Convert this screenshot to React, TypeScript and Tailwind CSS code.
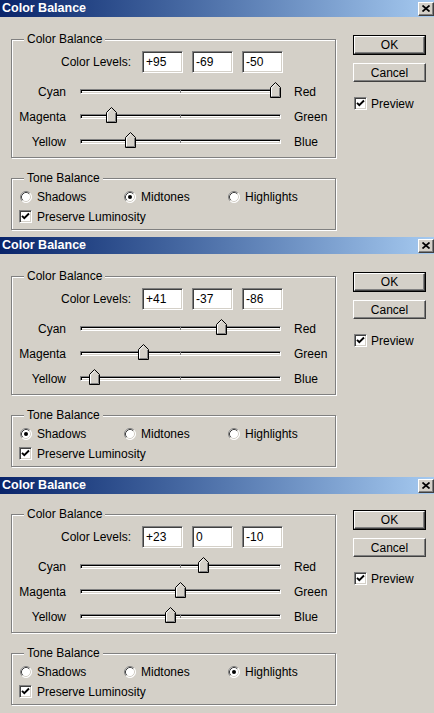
import React from "react";

type Tone = "shadows" | "midtones" | "highlights";

type DialogProps = {
  levels: [number, number, number];
  tone: Tone;
  className: string;
  shift?: boolean;
};

const sliders = [
  { left: "Cyan", right: "Red" },
  { left: "Magenta", right: "Green" },
  { left: "Yellow", right: "Blue" },
];

const tones: { id: Tone; label: string }[] = [
  { id: "shadows", label: "Shadows" },
  { id: "midtones", label: "Midtones" },
  { id: "highlights", label: "Highlights" },
];

const sunken =
  "border border-t-[#808080] border-l-[#808080] border-r-white border-b-white shadow-[inset_1px_1px_0_#404040,inset_-1px_-1px_0_#d4d0c8]";
const raised =
  "border border-t-white border-l-white border-r-[#404040] border-b-[#404040] shadow-[inset_-1px_-1px_0_#808080,inset_1px_1px_0_#d4d0c8]";

function fmt(v: number) {
  return v > 0 ? `+${v}` : `${v}`;
}

function Thumb() {
  return (
    <svg width="11" height="16" viewBox="0 0 11 16">
      <polygon points="0.5,5.5 5.5,0.5 10.5,5.5 10.5,15.5 0.5,15.5" fill="#d4d0c8" />
      <path d="M1.5 14.5 V5.9 L5.5 1.9" stroke="#fff" fill="none" />
      <path d="M9.5 6 V14.5 H1.5" stroke="#808080" fill="none" />
      <path d="M0.5 15.5 V5.5 L5.5 0.5 L10.5 5.5 V15.5 Z" stroke="#000" fill="none" />
    </svg>
  );
}

function Radio({ on }: { on: boolean }) {
  return (
    <svg width="12" height="12" viewBox="0 0 12 12" className="shrink-0">
      <circle cx="6" cy="6" r="5.5" fill="#fff" />
      <path d="M2.11 9.89 A5.5 5.5 0 0 1 9.89 2.11" stroke="#808080" fill="none" />
      <path d="M9.89 2.11 A5.5 5.5 0 0 1 2.11 9.89" stroke="#fff" fill="none" />
      <path d="M2.82 9.18 A4.5 4.5 0 0 1 9.18 2.82" stroke="#404040" fill="none" />
      <path d="M9.18 2.82 A4.5 4.5 0 0 1 2.82 9.18" stroke="#d4d0c8" fill="none" />
      {on && <circle cx="6" cy="6" r="2" fill="#000" />}
    </svg>
  );
}

function Checkbox() {
  return (
    <div className={`w-[13px] h-[13px] bg-white shrink-0 flex items-center justify-center ${sunken}`}>
      <svg width="9" height="9" viewBox="0 0 9 9">
        <path d="M1 3.8 L3.3 6.2 L8 1.5" stroke="#000" strokeWidth="1.9" fill="none" />
      </svg>
    </div>
  );
}

function GroupBox({
  label,
  className,
  children,
}: {
  label: string;
  className: string;
  children: React.ReactNode;
}) {
  return (
    <div
      className={`relative w-[325px] border border-[#808080] shadow-[1px_1px_0_#fff,inset_1px_1px_0_#fff] ${className}`}
    >
      <span className="absolute left-[12px] top-[-8px] px-[3px] bg-[#d4d0c8] leading-[14px]">
        {label}
      </span>
      {children}
    </div>
  );
}

function Dialog({ levels, tone, className, shift }: DialogProps) {
  return (
    <div className={`flex flex-col bg-[#d4d0c8] overflow-hidden ${className}`}>
      {/* title bar */}
      <div className="h-[17px] shrink-0 flex items-center pl-[2px] bg-linear-to-r from-[#0a246a] to-[#a6caf0]">
        <span className="text-white font-bold text-[12.5px] leading-none">Color Balance</span>
        <div className={`ml-auto w-[16px] h-[14px] bg-[#d4d0c8] flex items-center justify-center ${raised}`}>
          <svg width="8" height="7" viewBox="0 0 8 7">
            <path d="M0.5 0.5 L7.5 6.5 M7.5 0.5 L0.5 6.5" stroke="#000" strokeWidth="1.7" />
          </svg>
        </div>
      </div>

      <div className="flex">
        <div className={`pl-[11px] ${shift ? "pt-[20px]" : "pt-[22px]"}`}>
          <GroupBox label="Color Balance" className="h-[119px]">
            <div className="flex items-center h-[22px] mt-[11px]">
              <span className="w-[119px] text-right">Color Levels:</span>
              <div className="ml-[11px] flex gap-[9px]">
                {levels.map((v, i) => (
                  <div key={i} className={`w-[41px] h-[22px] bg-white flex items-center pl-[3px] ${sunken}`}>
                    {fmt(v)}
                  </div>
                ))}
              </div>
            </div>

            <div className="mt-[6px] flex flex-col">
              {sliders.map((s, i) => (
                <div key={s.left} className="h-[25px] flex items-center">
                  <span className="w-[54px] text-right">{s.left}</span>
                  <div className="relative ml-[14px] w-[201px] h-[5px] bg-white border border-t-[#808080] border-l-[#808080] border-r-white border-b-white shadow-[inset_1px_1px_0_#000,inset_-1px_-1px_0_#d4d0c8]">
                    <div className="absolute left-[99px] top-0 h-full w-px bg-[#808080]" />
                    <div className="absolute top-[-8px] flex" style={{ left: levels[i] + 94 }}>
                      <Thumb />
                    </div>
                  </div>
                  <span className="ml-[13px]">{s.right}</span>
                </div>
              ))}
            </div>
          </GroupBox>

          <GroupBox label="Tone Balance" className="h-[52px] mt-[20px]">
            <div className="flex h-[19px] mt-[8px] pl-[8px]">
              {tones.map((t) => (
                <div key={t.id} className="w-[104px] flex items-center gap-[5px]">
                  <Radio on={t.id === tone} />
                  <span>{t.label}</span>
                </div>
              ))}
            </div>
            <div className="flex items-center h-[19px] mt-[1px] pl-[7px] gap-[5px]">
              <Checkbox />
              <span>Preserve Luminosity</span>
            </div>
          </GroupBox>
        </div>

        <div className={`ml-[17px] flex flex-col ${shift ? "pt-[16px]" : "pt-[18px]"}`}>
          <div className="w-[73px] h-[20px] border border-black flex">
            <div className={`flex-1 flex items-center justify-center ${raised}`}>OK</div>
          </div>
          <div className={`mt-[8px] w-[73px] h-[19px] flex items-center justify-center ${raised}`}>
            Cancel
          </div>
          <div className="mt-[15px] ml-[1px] flex items-center gap-[4px]">
            <Checkbox />
            <span>Preview</span>
          </div>
        </div>
      </div>
    </div>
  );
}

export default function App() {
  return (
    <div className="w-[434px] h-[713px] overflow-hidden bg-[#d4d0c8] text-black text-[12px] leading-none font-['Liberation_Sans',Arial,sans-serif]">
      <Dialog levels={[95, -69, -50]} tone="midtones" className="h-[237px]" />
      <Dialog levels={[41, -37, -86]} tone="shadows" className="h-[240px]" />
      <Dialog levels={[23, 0, -10]} tone="highlights" className="h-[236px]" shift />
    </div>
  );
}
